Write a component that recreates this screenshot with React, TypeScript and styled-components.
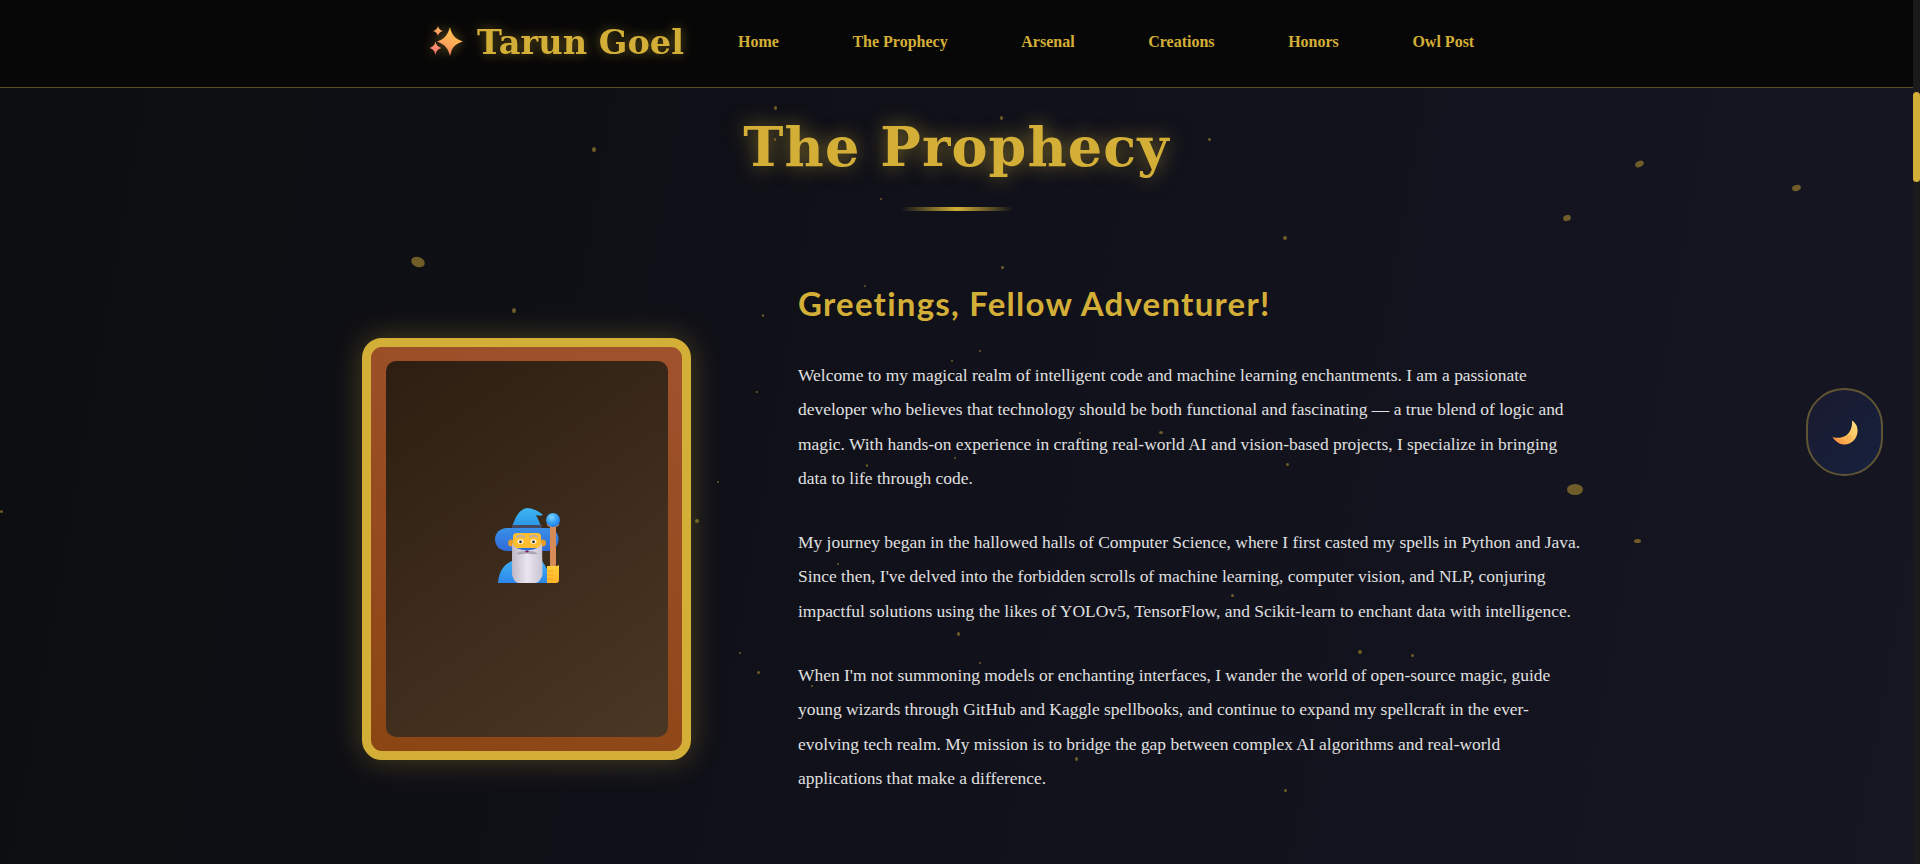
import React from 'react';
import styled, { createGlobalStyle } from 'styled-components';

const GOLD = '#d4af37';

const GlobalStyle = createGlobalStyle`
  html, body {
    margin: 0;
    padding: 0;
    height: 100%;
    overflow: hidden;
    background: #0b0b0d;
  }
  * {
    box-sizing: border-box;
  }
`;

// [x, y, w, h, rotate] measured from the centre of each mote
const particles: [number, number, number, number, number][] = [
  [418, 262, 14, 10, 20], [514, 310, 4, 5, 0], [594, 149, 4, 5, 0], [775, 108, 3, 4, 0],
  [763, 315, 2, 3, 0], [775, 139, 2, 3, 0], [1639, 164, 9, 6, -25], [1796, 188, 9, 6, -15],
  [1567, 218, 8, 6, -20], [1575, 489, 16, 11, 0], [1637, 541, 7, 4, 0], [1001, 118, 3, 4, 0],
  [881, 199, 2, 2, 0], [1209, 139, 3, 3, 0], [1285, 238, 4, 4, 0], [865, 286, 2, 2, 0],
  [980, 351, 2, 2, 0], [952, 361, 2, 2, 0], [1161, 432, 4, 3, 0], [1080, 433, 2, 2, 0],
  [955, 458, 2, 2, 0], [867, 465, 2, 3, 0], [838, 564, 2, 2, 0], [1232, 595, 3, 3, 0],
  [958, 634, 3, 4, 0], [1360, 652, 4, 4, 0], [1412, 655, 3, 3, 0], [980, 663, 2, 2, 0],
  [812, 686, 2, 2, 0], [1076, 759, 3, 4, 0], [1285, 790, 3, 3, 0], [1, 511, 3, 3, 0],
  [718, 482, 2, 2, 0], [697, 521, 4, 4, 0], [757, 392, 2, 2, 0], [740, 653, 2, 2, 0],
  [758, 672, 3, 3, 0], [1002, 267, 3, 3, 0], [1287, 464, 3, 3, 0],
];

const navItems = ['Home', 'The Prophecy', 'Arsenal', 'Creations', 'Honors', 'Owl Post'];

const SparklesIcon = () => (
  <svg width="40" height="33" viewBox="0 0 40 33" style={{ display: 'block' }}>
    <defs>
      <linearGradient id="sparkBig" x1="0.7" y1="0" x2="0.2" y2="1">
        <stop offset="0" stopColor="#ffc94f" />
        <stop offset="0.55" stopColor="#ffa858" />
        <stop offset="1" stopColor="#ff7f6e" />
      </linearGradient>
      <linearGradient id="sparkSmall" x1="0.5" y1="0" x2="0.5" y2="1">
        <stop offset="0" stopColor="#ffb659" />
        <stop offset="1" stopColor="#ff9062" />
      </linearGradient>
      <linearGradient id="sparkLow" x1="0.5" y1="0" x2="0.5" y2="1">
        <stop offset="0" stopColor="#ff9a6a" />
        <stop offset="1" stopColor="#ff7272" />
      </linearGradient>
    </defs>
    <path d="M25 2 C26.5 9 29 13.5 38 16.5 C29.5 19 26.5 23 25 31 C23 23 20 19.5 12 16.5 C20 14 23 9 25 2 Z" fill="url(#sparkBig)" />
    <path d="M13 1 C13.6 3.5 14.8 5 18 6 C14.8 7 13.6 8.5 13 11 C12.3 8.5 11.2 7 8 6 C11.2 5 12.3 3.5 13 1 Z" fill="url(#sparkSmall)" />
    <path d="M10.5 16.5 C11.3 20 12.7 21.5 16.5 23 C12.7 24.2 11.3 26 10.5 30 C9.7 26 8.3 24.2 4.5 23 C8.3 21.5 9.7 20 10.5 16.5 Z" fill="url(#sparkLow)" />
  </svg>
);

const WizardIcon = () => (
  <svg width="65" height="75" viewBox="0 0 65 75" style={{ display: 'block' }}>
    <defs>
      <linearGradient id="wizRobe" x1="0" y1="0" x2="0" y2="1">
        <stop offset="0" stopColor="#3fb0f5" />
        <stop offset="1" stopColor="#2c86e8" />
      </linearGradient>
      <linearGradient id="wizCone" x1="0" y1="0" x2="0" y2="1">
        <stop offset="0" stopColor="#3cb6f2" />
        <stop offset="1" stopColor="#2a96e6" />
      </linearGradient>
      <linearGradient id="wizBrim" x1="0" y1="0" x2="0" y2="1">
        <stop offset="0" stopColor="#3a8fe8" />
        <stop offset="1" stopColor="#2f6bd6" />
      </linearGradient>
      <linearGradient id="wizBeard" x1="0" y1="0" x2="1" y2="0">
        <stop offset="0" stopColor="#bdb8c6" />
        <stop offset="0.5" stopColor="#eae6f0" />
        <stop offset="1" stopColor="#c9c3d2" />
      </linearGradient>
      <radialGradient id="wizOrb" cx="0.4" cy="0.3" r="0.8">
        <stop offset="0" stopColor="#7fd6ff" />
        <stop offset="0.5" stopColor="#35a0f5" />
        <stop offset="1" stopColor="#1f6fe0" />
      </radialGradient>
      <linearGradient id="wizHand" x1="0" y1="0" x2="0" y2="1">
        <stop offset="0" stopColor="#ffcf3a" />
        <stop offset="1" stopColor="#ffb428" />
      </linearGradient>
    </defs>
    <path d="M3 75 C3.5 64 9 56 17 53 L47 53 C51 58 54 64 55 75 Z" fill="url(#wizRobe)" />
    <path d="M17 19 C20 10 24 1 32 0 C37 0 44 3 48 7 C46 8 44 8 41 7 C43 11 45 15 46 19 Z" fill="url(#wizCone)" />
    <rect x="17" y="17" width="30" height="4" fill="#45485f" />
    <path d="M12 20 L52 20 C59 20 63.5 25 63.5 31 C63.5 38 59 43 52 43 L12 43 C5 43 0 38 0 31 C0 25 5 20 12 20 Z" fill="url(#wizBrim)" />
    <circle cx="16.5" cy="35" r="3.5" fill="#e69b24" />
    <circle cx="47.5" cy="35" r="3.5" fill="#e69b24" />
    <path d="M18 28 C18 26 20 25 22 25 L42 25 C44 25 46 26 46 28 L46 40 L18 40 Z" fill="#ffbe30" />
    <path d="M17 34 C19 42 27 41 32 43 C37 41 45 42 47 34 L47.5 66 C47 70 44 75 40 75 L24 75 C20 75 17.5 70 17 66 Z" fill="url(#wizBeard)" />
    <path d="M22 29 C24 27.5 27 27.5 29 29 M35 29 C37 27.5 40 27.5 42 29" stroke="#b3aebb" strokeWidth="1.8" fill="none" strokeLinecap="round" />
    <ellipse cx="25.5" cy="33.5" rx="3" ry="2.3" fill="#fff3dc" />
    <ellipse cx="38.5" cy="33.5" rx="3" ry="2.3" fill="#fff3dc" />
    <circle cx="25.5" cy="33.8" r="1.4" fill="#3a2c2c" />
    <circle cx="38.5" cy="33.8" r="1.4" fill="#3a2c2c" />
    <path d="M21 46 C26 42 30 43 32 44 C34 43 38 42 43 46 C38 46.5 35 46 32 45.5 C29 46 26 46.5 21 46 Z" fill="#aca7b5" />
    <ellipse cx="32" cy="43.6" rx="1.8" ry="0.8" fill="#8d1450" />
    <rect x="55" y="18" width="6" height="44" fill="#d78c58" />
    <path d="M52 17 C54 20 62 20 64 17 L64 14 L52 14 Z" fill="#d78c58" />
    <circle cx="58" cy="12" r="7" fill="url(#wizOrb)" />
    <path d="M52 58 L62 58 L64 57 L64 72 C64 74 63 75 61 75 L52 75 Z" fill="url(#wizHand)" />
    <path d="M52 63 L58 63 M52 67 L58 67 M52 71 L58 71" stroke="#eb9a1e" strokeWidth="0.8" />
  </svg>
);

const MoonIcon = () => (
  <svg width="26" height="25" viewBox="0 0 26 25" style={{ display: 'block' }}>
    <defs>
      <linearGradient id="moonFill" x1="0.9" y1="0.1" x2="0.1" y2="0.9">
        <stop offset="0" stopColor="#ffdb7c" />
        <stop offset="0.55" stopColor="#ffbf5c" />
        <stop offset="1" stopColor="#ff8f3f" />
      </linearGradient>
    </defs>
    <path d="M20 0.5 C24 3 26 7 25.5 12 C25 19 19 25 11.5 24.5 C7 24 3 21 0.5 17 C5 18.5 10 18 14 15.5 C18.5 12.5 20.5 6.5 20 0.5 Z" fill="url(#moonFill)" />
    <circle cx="17" cy="18" r="2.2" fill="none" stroke="#e8a24a" strokeWidth="0.8" />
    <circle cx="10" cy="21" r="1.2" fill="#e8a24a" opacity="0.7" />
  </svg>
);

const App = () => (
  <>
    <GlobalStyle />
    <Page>
      <Main>
        <ParticleField>
          {particles.map(([x, y, w, h, r], i) => (
            <Particle key={i} $x={x} $y={y} $w={w} $h={h} $r={r} />
          ))}
        </ParticleField>

        <Header>
          <Logo>
            <SparklesIcon />
            <LogoText>Tarun Goel</LogoText>
          </Logo>
          <Nav>
            {navItems.map((item) => (
              <NavLink key={item} href="#">{item}</NavLink>
            ))}
          </Nav>
        </Header>

        <Section>
          <Title>The Prophecy</Title>
          <TitleRule />
          <About>
            <PortraitFrame>
              <Portrait>
                <WizardIcon />
              </Portrait>
            </PortraitFrame>
            <Story>
              <Greeting>Greetings, Fellow Adventurer!</Greeting>
              <Paragraph>
                Welcome to my magical realm of intelligent code and machine learning enchantments. I am a passionate<br />
                developer who believes that technology should be both functional and fascinating — a true blend of logic and<br />
                magic. With hands-on experience in crafting real-world AI and vision-based projects, I specialize in bringing<br />
                data to life through code.
              </Paragraph>
              <Paragraph>
                My journey began in the hallowed halls of Computer Science, where I first casted my spells in Python and Java.<br />
                Since then, I've delved into the forbidden scrolls of machine learning, computer vision, and NLP, conjuring<br />
                impactful solutions using the likes of YOLOv5, TensorFlow, and Scikit-learn to enchant data with intelligence.
              </Paragraph>
              <Paragraph>
                When I'm not summoning models or enchanting interfaces, I wander the world of open-source magic, guide<br />
                young wizards through GitHub and Kaggle spellbooks, and continue to expand my spellcraft in the ever-<br />
                evolving tech realm. My mission is to bridge the gap between complex AI algorithms and real-world<br />
                applications that make a difference.
              </Paragraph>
            </Story>
          </About>
        </Section>

        <ThemeToggle type="button" aria-label="Toggle theme">
          <MoonIcon />
        </ThemeToggle>
      </Main>
      <ScrollTrack>
        <ScrollThumb />
      </ScrollTrack>
    </Page>
  </>
);

export default App;

const Page = styled.div`
  display: flex;
  height: 100vh;
  overflow: hidden;
`;

const Main = styled.main`
  position: relative;
  flex: 1;
  min-width: 0;
  display: flex;
  flex-direction: column;
  overflow: hidden;
  background: linear-gradient(100deg, #0d0e10 0%, #10111a 50%, #151622 100%);
`;

const ParticleField = styled.div`
  position: absolute;
  inset: 0;
  pointer-events: none;
`;

const Particle = styled.span.attrs<{ $x: number; $y: number; $w: number; $h: number; $r: number }>((p) => ({
  style: {
    left: p.$x - p.$w / 2,
    top: p.$y - p.$h / 2,
    width: p.$w,
    height: p.$h,
    transform: `rotate(${ p.$r }deg)`,
  },
}))`
  position: absolute;
  border-radius: 50%;
  background: #6f5c28;
`;

const Header = styled.header`
  position: relative;
  flex: none;
  height: 88px;
  display: flex;
  align-items: center;
  gap: 54px;
  padding: 0 0 4px 425px;
  background: #070707;
  border-bottom: 1px solid #5c4f27;
`;

const Logo = styled.div`
  display: flex;
  align-items: center;
  gap: 12px;
  filter: drop-shadow(0 0 6px rgba(212, 175, 55, 0.45));
`;

const LogoText = styled.span`
  font-family: 'DejaVu Serif', serif;
  font-size: 33.6px;
  font-weight: 700;
  color: ${ GOLD };
`;

const Nav = styled.nav`
  display: flex;
  gap: 73.6px;
`;

const NavLink = styled.a`
  font-family: 'Liberation Serif', serif;
  font-size: 16px;
  font-weight: 700;
  color: ${ GOLD };
  text-decoration: none;
`;

const Section = styled.section`
  position: relative;
  display: flex;
  flex-direction: column;
  align-items: center;
`;

const Title = styled.h1`
  margin: 23px 0 0;
  font-family: 'DejaVu Serif', serif;
  font-size: 54px;
  line-height: 72px;
  font-weight: 700;
  letter-spacing: 1.1px;
  color: ${ GOLD };
  text-shadow: 0 0 20px rgba(212, 175, 55, 0.55);
`;

const TitleRule = styled.div`
  width: 112px;
  height: 4px;
  margin-top: 24px;
  background: linear-gradient(90deg, transparent, ${ GOLD }, transparent);
`;

const About = styled.div`
  align-self: stretch;
  display: flex;
  align-items: center;
  gap: 107px;
  padding-left: 362px;
  margin-top: 72px;
`;

const PortraitFrame = styled.div`
  flex: none;
  width: 329px;
  height: 422px;
  padding: 14px 14px 14px 15px;
  border: 9px solid ${ GOLD };
  border-radius: 20px;
  background: linear-gradient(20deg, #8b4513, #a0522d);
  box-shadow: 0 0 30px rgba(212, 175, 55, 0.3);
`;

const Portrait = styled.div`
  height: 100%;
  padding-bottom: 7px;
  display: flex;
  align-items: center;
  justify-content: center;
  border-radius: 10px;
  background: linear-gradient(145deg, #2e1e11, #4a3825);
`;

const Story = styled.div`
  display: flex;
  flex-direction: column;
  gap: 30px;
  padding-bottom: 19px;
`;

const Greeting = styled.h2`
  margin: 0 0 5px;
  font-family: 'Lato', sans-serif;
  font-size: 33px;
  line-height: 40px;
  font-weight: 700;
  letter-spacing: 1.25px;
  color: ${ GOLD };
`;

const Paragraph = styled.p`
  margin: 0;
  font-family: 'Liberation Serif', serif;
  font-size: 17.45px;
  line-height: 34.3px;
  white-space: nowrap;
  color: #e0e0e0;
`;

const ThemeToggle = styled.button`
  position: absolute;
  left: 1806px;
  top: 388px;
  width: 77px;
  height: 88px;
  padding: 0;
  display: flex;
  align-items: center;
  justify-content: center;
  border: 2px solid #5f5433;
  border-radius: 38px;
  background: linear-gradient(135deg, #1a1a2e, #16213e);
`;

const ScrollTrack = styled.div`
  flex: none;
  width: 7px;
  padding-top: 92px;
  background: #1a1a1a;
`;

const ScrollThumb = styled.div`
  height: 90px;
  border-radius: 4px;
  background: ${ GOLD };
`;
